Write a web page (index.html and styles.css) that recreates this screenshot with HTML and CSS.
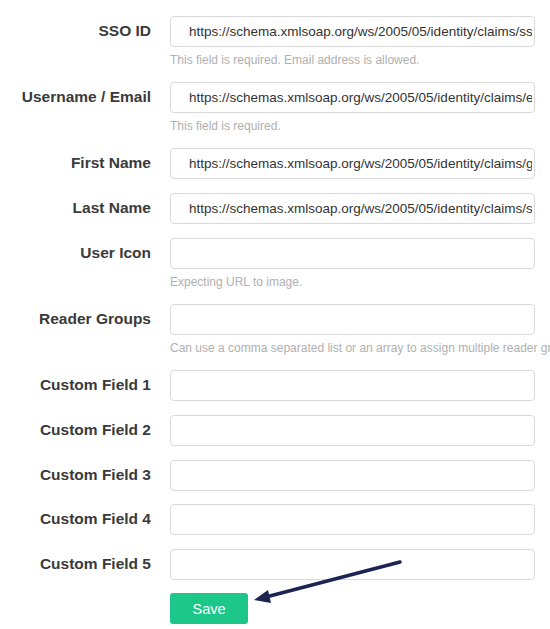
FILE: index.html
```html
<!DOCTYPE html>
<html>
<head>
<meta charset="utf-8">
<link rel="stylesheet" href="styles.css">
</head>
<body>
<form class="form">
  <div class="row">
    <label class="label" for="f1">SSO ID</label>
    <div class="field">
      <input id="f1" class="input" type="text" readonly value="https://schema.xmlsoap.org/ws/2005/05/identity/claims/sso">
      <div class="help">This field is required. Email address is allowed.</div>
    </div>
  </div>
  <div class="row">
    <label class="label" for="f2">Username / Email</label>
    <div class="field">
      <input id="f2" class="input" type="text" readonly value="https://schemas.xmlsoap.org/ws/2005/05/identity/claims/emailaddress">
      <div class="help">This field is required.</div>
    </div>
  </div>
  <div class="row">
    <label class="label" for="f3">First Name</label>
    <div class="field">
      <input id="f3" class="input" type="text" readonly value="https://schemas.xmlsoap.org/ws/2005/05/identity/claims/givenname">
    </div>
  </div>
  <div class="row">
    <label class="label" for="f4">Last Name</label>
    <div class="field">
      <input id="f4" class="input" type="text" readonly value="https://schemas.xmlsoap.org/ws/2005/05/identity/claims/surname">
    </div>
  </div>
  <div class="row">
    <label class="label" for="f5">User Icon</label>
    <div class="field">
      <input id="f5" class="input" type="text">
      <div class="help">Expecting URL to image.</div>
    </div>
  </div>
  <div class="row">
    <label class="label" for="f6">Reader Groups</label>
    <div class="field">
      <input id="f6" class="input" type="text">
      <div class="help">Can use a comma separated list or an array to assign multiple reader groups.</div>
    </div>
  </div>
  <div class="row">
    <label class="label" for="f7">Custom Field 1</label>
    <div class="field"><input id="f7" class="input" type="text"></div>
  </div>
  <div class="row">
    <label class="label" for="f8">Custom Field 2</label>
    <div class="field"><input id="f8" class="input" type="text"></div>
  </div>
  <div class="row">
    <label class="label" for="f9">Custom Field 3</label>
    <div class="field"><input id="f9" class="input" type="text"></div>
  </div>
  <div class="row">
    <label class="label" for="f10">Custom Field 4</label>
    <div class="field"><input id="f10" class="input" type="text"></div>
  </div>
  <div class="row">
    <label class="label" for="f11">Custom Field 5</label>
    <div class="field"><input id="f11" class="input" type="text"></div>
  </div>
  <div class="row">
    <span class="label"></span>
    <div class="field"><button type="button" class="save">Save</button></div>
  </div>
</form>
<svg class="arrow" width="550" height="629" viewBox="0 0 550 629">
  <line x1="400" y1="562" x2="266" y2="597" stroke="#1c2451" stroke-width="3.5" stroke-linecap="round"/>
  <polygon points="254,600 268,590 271,603" fill="#1c2451"/>
</svg>
</body>
</html>
```
FILE: styles.css
```css
html, body {
  margin: 0;
  padding: 0;
  background: #fff;
  overflow: hidden;
}
.form {
  padding-top: 16px;
  font-family: "Liberation Sans", Arial, sans-serif;
}
.row {
  display: grid;
  grid-template-columns: 151px 365px;
  column-gap: 19px;
  margin-bottom: 14px;
}
.row:nth-child(n+9) {
  margin-top: -0.4px;
}
.label {
  font-weight: bold;
  font-size: 15.5px;
  color: #3a3a3a;
  text-align: right;
  height: 31px;
  line-height: 30px;
  white-space: nowrap;
}
.field {
  min-width: 0;
}
.input {
  display: block;
  box-sizing: border-box;
  width: 100%;
  height: 31px;
  margin: 0;
  border: 1px solid #d9d9d9;
  border-radius: 4px;
  padding: 0 2px 0 18px;
  font-family: "Liberation Sans", Arial, sans-serif;
  font-size: 13.5px;
  color: #333;
  background: #fff;
  outline: none;
}
.help {
  margin-top: 6px;
  font-size: 12px;
  line-height: 15px;
  color: #b0b0b0;
  white-space: nowrap;
}
.save {
  box-sizing: border-box;
  width: 78px;
  height: 31px;
  border: none;
  border-radius: 3px;
  background: #1dc689;
  color: #fff;
  font-family: "Liberation Sans", Arial, sans-serif;
  font-size: 14.5px;
  padding: 0;
}
.arrow {
  position: absolute;
  left: 0;
  top: 0;
  pointer-events: none;
}
```
